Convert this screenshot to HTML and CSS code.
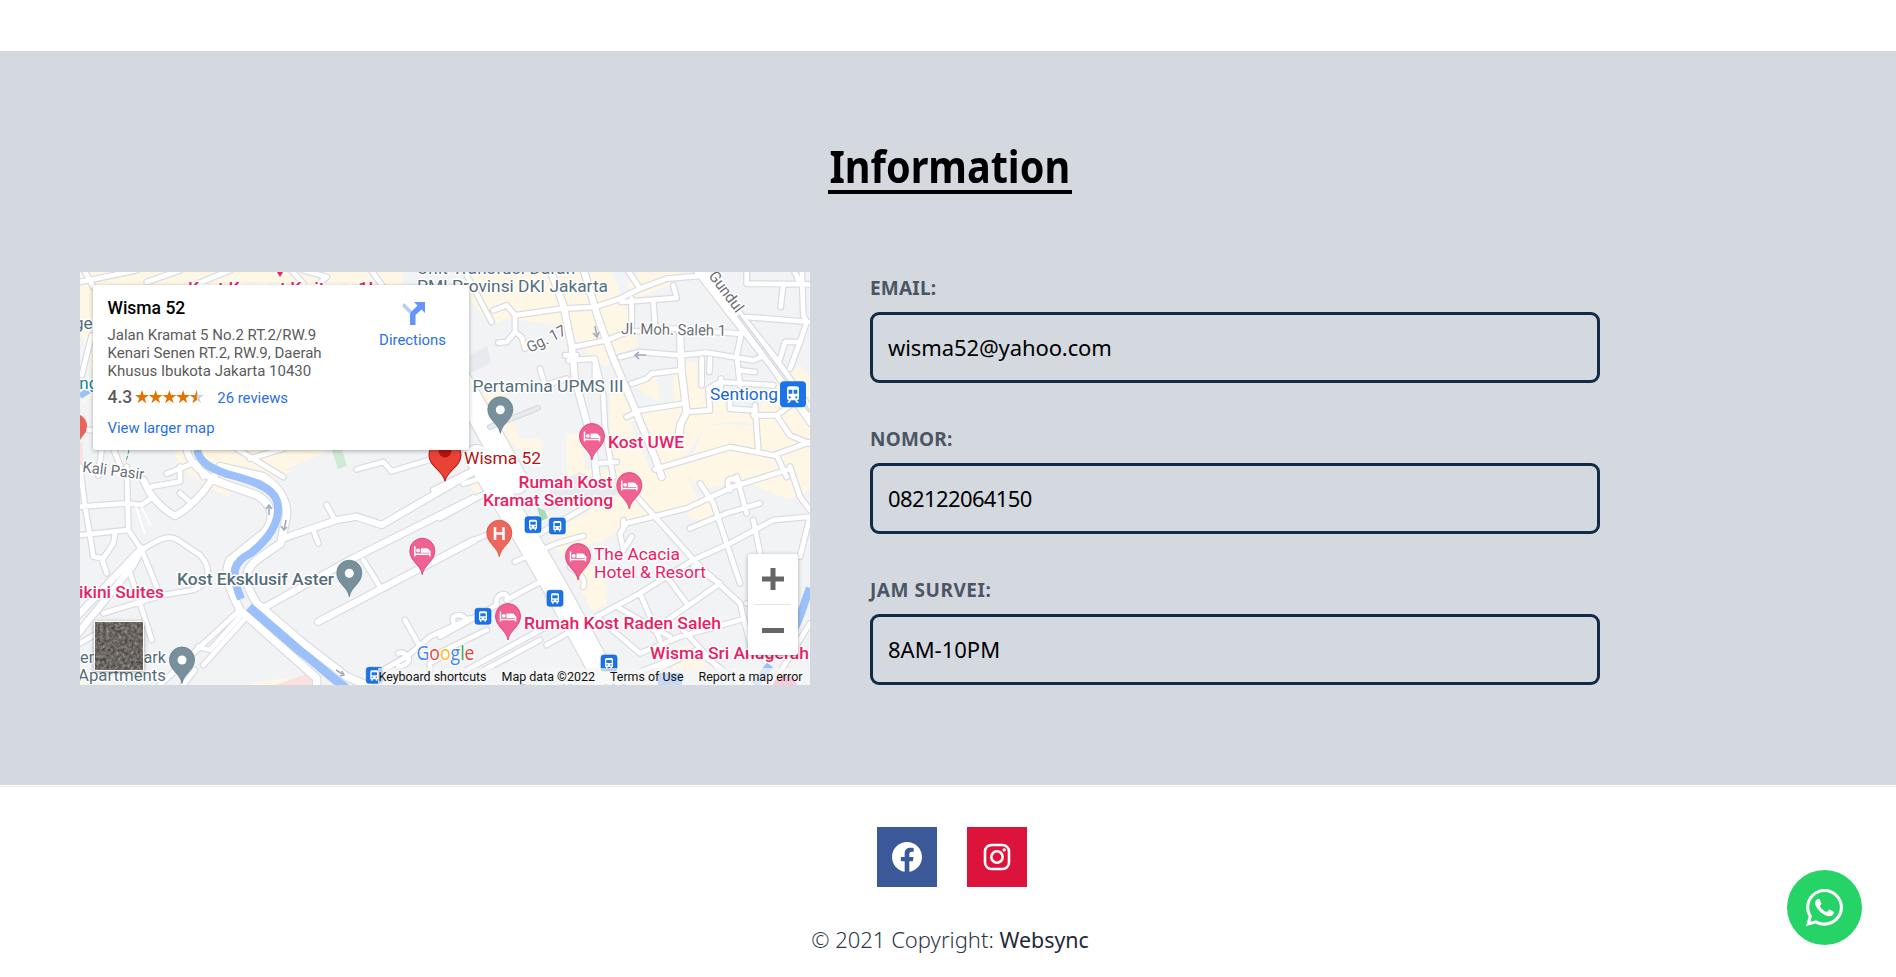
FILE: index.html
```html
<!DOCTYPE html>
<html lang="id">
<head>
<meta charset="utf-8">
<title>Wisma 52</title>
<link rel="stylesheet" href="styles.css">
</head>
<body>
<section class="info">
  <h2 class="info-title"><span class="info-title-text">Information</span></h2>
  <div class="info-grid">
    <div class="map">
      <svg class="map-canvas" viewBox="0 0 730 413" width="730" height="413">
        <defs>
          <g id="roads">
            <g transform="translate(-10 -10) scale(.33333)">
              <path class="road" d="M30 60L200 25M40 20L70 75M230 60L330 25M370 70L480 25M660 20L700 65M740 70L770 45L700 25M900 20L940 75M35 340L65 220M20 500L70 505M95 560L85 640M130 560L150 610M290 635L380 600L400 645M500 560L640 645M540 590L640 560M860 622L940 600L965 628L1090 590"/>
              <path class="road avenue" d="M350 555C350 600 400 640 450 660"/>
            </g>
            <g transform="translate(360 -10) scale(.33333)">
              <path class="road" d="M70 20L155 180M160 145L200 130L225 160L365 140L465 135L540 110L600 80L680 50L800 40M600 80L560 20M225 160V210L200 240L175 242M225 210L245 225L255 260M400 255L500 235L560 210L700 200L900 215M375 280H410M385 295L465 290L490 400L495 500L520 645M465 290L465 360M575 110L575 190M640 120L645 190M545 120L710 108L700 70M540 285L600 270L720 280L800 272L880 285L940 295L975 280M575 365L620 350L635 335L720 325M560 465L600 445L730 425M740 450L810 445L805 380L840 360L1000 370M785 290L785 370M810 290L808 330M843 350V380M905 210L890 280L900 370M900 325L945 330M920 165L1110 180M920 20V65L1110 67M1080 67L1060 20M1030 65L1022 135M1085 20L1090 160L1100 180L1080 240H1035L1020 290M1080 240L1050 320M945 430L955 570M940 460H1010L1050 520L1110 545M1010 460L1050 430M645 622L870 555L1000 580L1110 540M1010 580L1040 645M870 410V440L940 445M300 320L315 370L380 350M465 605L530 600M725 480L720 540M220 620L70 665"/>
              <path class="road avenue" d="M330 20L370 130L395 250L405 350L440 480L460 560L470 645M720 210L725 330L740 450L720 490L715 530"/>
              <path class="road avenue" d="M430 20L475 170L520 290L580 430L650 600L665 645"/>
              <path class="road rail-road" d="M780 20L880 150L1000 300L1120 475"/>
              <path class="road main-road" d="M20 290L130 480L230 660"/>
            </g>
            <g transform="translate(-10 198) scale(.33333)">
              <path class="road" d="M30 110L170 100L215 105L250 80M30 195L175 180M170 -10L175 180L215 240M60 195L70 260L100 265L130 220L135 190M95 265L110 310M30 -10L45 110L60 195M215 240C270 205 300 190 330 215L390 255C430 300 415 340 370 360L280 375L100 430M215 240L260 350M180 310L210 400L245 510M30 520L100 480M330 70L365 100M245 50L330 35V-10M770 105L795 150M730 180L745 220M880 270L930 350M1005 450L1050 530M930 605L1010 560L1080 500L1200 445M985 590C1040 580 1010 540 985 550M1080 600V580L1150 540M380 540L510 420M400 585L535 435M385 530L420 540L510 440M380 540L270 645M340 645L375 600"/>
              <path class="road avenue" d="M20 495L190 285L215 235M20 440L210 240M220 30L240 70C270 110 290 125 315 138C340 125 370 100 400 65L440 10"/>
              <path class="road bank" d="M430 30L560 75C620 110 610 160 580 190L480 270C460 310 475 350 510 420L740 625V660M450 -10L580 20C640 60 660 110 645 160L632 220L560 270C510 310 530 350 560 400L700 520L830 620L900 650"/>
              <path class="road avenue" d="M560 425L830 275L1210 85M745 455L1210 212M640 205L800 150L860 140L935 165L1210 5"/>
            </g>
            <g transform="translate(360 198) scale(.33333)">
              <path class="road" d="M0 145L90 95L170 50M-20 60L130 -15M0 265L90 215L250 150M300 190L440 110M225 275L350 220L430 198M0 500L170 405C160 370 210 360 200 390L320 325M0 548L140 480M80 600L320 470M40 650L300 510M320 525L400 480M430 350C440 320 410 310 390 290M40 455C30 430 70 430 80 450M590 80L690 190L770 280L900 400L940 560M470 440L600 370L760 270L870 220L1000 150L1110 140M540 190L560 160L640 140L740 115L880 50L1040 0M540 190L550 240L575 200M550 150V170M750 175L860 130L960 100M890 20L920 130M1050 -10L1080 80L1110 120M780 40L820 100L900 340M940 150L960 250M1110 140L1080 260M600 370L660 510M680 320L740 400M530 410L690 500M640 480L840 340M760 290L840 340M470 440L600 550L720 500L900 450M650 600L770 540L900 640M730 480L840 600M560 620L720 560M1110 460L1000 640M920 400L1000 380M870 60C850 20 880 20 900 40"/>
              <path class="road main-road" d="M110 -40L240 170L350 360L530 690"/>
            </g>
          </g>
          <path id="pin" d="M0 0C-1.500 -10 -12.500 -13 -12.500 -24A12.500 12.500 0 0 1 12.500 -24C12.500 -13 1.500 -10 0 0Z"/>
          <g id="hotel">
            <use href="#pin" fill="#f06292" stroke="#d83a76" stroke-width=".8"/>
            <path d="M-7.500 -28.500V-18.500M-7.500 -20.500H7.500M7.500 -18.500V-24" fill="none" stroke="#fff" stroke-width="1.500"/>
            <circle cx="-4.200" cy="-24.200" r="1.900" fill="#fff"/>
            <path d="M-1.500 -26.500H4Q7.500 -26.500 7.500 -22H-1.500Z" fill="#fff"/>
          </g>
          <g id="place">
            <use href="#pin" fill="#78909c" stroke="#607d8b" stroke-width=".8"/>
            <circle cy="-23.500" r="4.500" fill="#fff"/>
          </g>
          <g id="bus">
            <rect width="16" height="16" rx="2.500" fill="#1a73e8" stroke="#0d5bc6" stroke-width=".6"/>
            <path d="M4 4.500Q4 3 5.500 3H10.500Q12 3 12 4.500V12H11V13.500H9.500V12H6.500V13.500H5V12H4Z" fill="#fff"/>
            <path d="M5.300 5H10.700V8H5.300Z" fill="#1a73e8"/>
            <circle cx="6" cy="10" r=".8" fill="#1a73e8"/><circle cx="10" cy="10" r=".8" fill="#1a73e8"/>
          </g>
        </defs>
        <rect width="730" height="413" fill="#f1f3f4"/>
        <g fill="#fef7e5">
          <g transform="translate(-10 -10) scale(.33333)">
            <path d="M30 30H1000V75H30ZM30 75H70V340L30 200ZM30 430L70 370V400ZM310 560H790L560 660H400L330 620Z"/>
            <path d="M30 540H38V645H30Z" fill="#fce0de"/>
          </g>
          <g transform="translate(360 -10) scale(.33333)">
            <path d="M70 30H515L560 140L595 250L540 275L500 310L460 300L430 250L380 245L370 190L200 170L150 190L80 100ZM560 70L600 30H720L700 65L590 110ZM100 400L190 380L240 530L300 530L310 570L230 560L150 480ZM510 400L560 380L590 450L700 420V340H650L660 420L590 380L600 350L730 330V300H775L770 370L860 370V440H960L1000 360L1080 310L1110 340V645H680L600 470L570 480L640 645H380V520L420 515L440 640L510 640Z"/>
          </g>
          <g transform="translate(-10 198) scale(.33333)"><path d="M360 0L430 0L480 60L475 80L400 45ZM590 0H670L610 35ZM540 645Q600 620 680 630L740 645ZM30 620H50V645H30Z"/></g>
          <g transform="translate(360 198) scale(.33333)">
            <path d="M90 50L130 20L200 110L190 150ZM380 0H730L780 100L640 130L480 215L350 240L320 190L440 130ZM720 0H1110V60L1050 90L900 30L790 60ZM360 240L400 225L500 340V400L460 430ZM680 540L780 520L800 590L560 640L640 600ZM700 90L820 90V150L760 150Z"/>
          </g>
        </g>
        <path d="M624 155Q648 147 678 152L678 170L606 185Z" fill="#f1f3f4"/>
        <path d="M624 155Q648 149 690 156L730 162V190L610 190Z" fill="#fef7e5"/>
        <path d="M390 83L407 74L411 91L390 101Z" fill="#e8eaed"/>
        <path d="M462 240L550 220L500 200L470 215Z" fill="#e8eaed"/>
        <path d="M252 178H262L267 194L258 197Z" fill="#ceead6"/>
        <path d="M195 413L232 400L240 413Z" fill="#fce0de"/>
        <use href="#roads" class="road-casing"/>
        <use href="#roads" class="road-fill"/>
        <path d="M410 155L458 136" class="lane-edge"/>
        <path d="M410 155L458 136" class="lane"/>
        <g class="river">
          <path d="M117 178C120 192 133 197 147 202C170 208 193 215 197 229C202 250 187 268 171 281C153 290 150 300 161 327" stroke-width="8"/>
          <path d="M169 335L220 379C240 394 250 405 266 416" stroke-width="9"/>
          <path d="M730 316C723 333 720 348 715 355M690 393L675 413" stroke-width="8"/>
          <path d="M0 124L10 118" stroke-width="6"/>
        </g>
        <path d="M658 43L730 140" stroke="#d0d3d8" stroke-width="3" fill="none"/>
        <path d="M658 43L730 140" stroke="#f1f3f4" stroke-width="1" fill="none"/>
        <path d="M457 235L465 239L468 246L461 249Z" fill="#a8dab5"/>
        <path d="M49 178L46 190" stroke="#34a853" stroke-dasharray="4 2" fill="none"/>
        <path d="M56 235L65 262M60 232L71 254" stroke="#fff" stroke-width="2" fill="none"/>
        <g class="arrows">
          <path d="M189 243V234M186 237L189 233L192 237M206 248L204 258M201 254L204 258L207 255M515 54L517 64M513 61L517 65L519 60M566 83H556M559 80L555 83L559 87M256 398L264 403M260 404L264 403L262 399"/>
        </g>

        <g class="label slate">
          <text x="337" y="2" textLength="158">Unit Transfusi Darah</text>
          <text x="337" y="20" textLength="191" lengthAdjust="spacingAndGlyphs">PMI Provinsi DKI Jakarta</text>
          <text x="392.500" y="119.500" textLength="151" lengthAdjust="spacingAndGlyphs">Pertamina UPMS III</text>
          <text x="-6" y="57">ge</text>
          <text class="medium" x="97" y="313" textLength="157" lengthAdjust="spacingAndGlyphs">Kost Eksklusif Aster</text>
          <text x="-14" y="391" textLength="100" lengthAdjust="spacingAndGlyphs">Menteng Park</text>
          <text x="-2" y="409" textLength="88" lengthAdjust="spacingAndGlyphs">Apartments</text>
        </g>
        <g class="label street">
          <text x="2" y="200" transform="rotate(7 2 200)" textLength="62" lengthAdjust="spacingAndGlyphs">Kali Pasir</text>
          <text transform="translate(450 81) rotate(-27)" textLength="42" lengthAdjust="spacingAndGlyphs">Gg. 17</text>
          <text x="541" y="62" textLength="105" lengthAdjust="spacingAndGlyphs" transform="rotate(1 541 62)">Jl. Moh. Saleh 1</text>
          <text transform="translate(628 4) rotate(53)" textLength="47" lengthAdjust="spacingAndGlyphs">Gundul</text>
        </g>
        <text class="label teal" x="-10" y="117">ang</text>
        <text class="label blue" x="630" y="128" textLength="68" lengthAdjust="spacingAndGlyphs">Sentiong</text>
        <g class="label pink">
          <text class="medium" x="108" y="22" textLength="190" lengthAdjust="spacingAndGlyphs">Kost Kramat Kwitang 1L</text>
          <text class="medium" x="528" y="175.500" textLength="76" lengthAdjust="spacingAndGlyphs">Kost UWE</text>
          <text class="medium" x="438.500" y="216" textLength="94" lengthAdjust="spacingAndGlyphs">Rumah Kost</text>
          <text class="medium" x="403" y="234" textLength="130" lengthAdjust="spacingAndGlyphs">Kramat Sentiong</text>
          <text x="514" y="288" textLength="86" lengthAdjust="spacingAndGlyphs">The Acacia</text>
          <text x="514" y="305.500" textLength="112" lengthAdjust="spacingAndGlyphs">Hotel &amp; Resort</text>
          <text class="medium" x="444" y="356.500" textLength="197" lengthAdjust="spacingAndGlyphs">Rumah Kost Raden Saleh</text>
          <text class="medium" x="570" y="386.500" textLength="159" lengthAdjust="spacingAndGlyphs">Wisma Sri Anugerah</text>
          <text class="medium" x="-1" y="326" textLength="85" lengthAdjust="spacingAndGlyphs">ikini Suites</text>
        </g>
        <text class="label red" x="384" y="192" textLength="77" lengthAdjust="spacingAndGlyphs">Wisma 52</text>

        <path d="M197 0H203L200 5Z" fill="#e91e63"/>
        <circle cx="-5" cy="154" r="12" fill="#ea6459"/><path d="M-3 166L7 158L0 168Z" fill="#ea6459"/>
        <use href="#pin" transform="translate(365 209.300) scale(1.280 1.100)" fill="#ea4335" stroke="#b31412" stroke-width=".8"/>
        <circle cx="365" cy="179" r="6.500" fill="#b31412"/>
        <use href="#place" x="420.300" y="161.300"/>
        <use href="#place" x="269.300" y="324.700"/>
        <use href="#place" x="102" y="411.500"/>
        <use href="#hotel" x="512" y="188"/>
        <use href="#hotel" x="549.300" y="237"/>
        <use href="#hotel" x="498" y="308"/>
        <use href="#hotel" x="428" y="368"/>
        <use href="#hotel" x="342.300" y="302.700"/>
        <use href="#pin" x="419.300" y="284.700" fill="#ee675c" stroke="#d84a40" stroke-width=".8"/>
        <path d="M415 255V268M423.500 255V268M415 261.500H423.500" stroke="#fff" stroke-width="2.600" fill="none"/>
        <circle cx="705" cy="415" r="12" fill="#f06292"/>
        <use href="#bus" x="445" y="244.700"/>
        <use href="#bus" x="469.300" y="246"/>
        <use href="#bus" x="467" y="318.300"/>
        <use href="#bus" x="395" y="336.300"/>
        <use href="#bus" x="521" y="383"/>
        <use href="#bus" x="286.300" y="395.300"/>
        <rect x="578" y="401" width="24" height="14" rx="2" fill="#4b8df0"/>
        <text class="label blue" x="438" y="424" textLength="125">Plaza Kenari Mas</text>
        <g transform="translate(700 109.300)">
          <rect width="26" height="26" rx="4" fill="#1a73e8"/>
          <path d="M7 7Q7 5 10 5H16Q19 5 19 7V17Q19 19 17 19L19 21.500H16.500L15 19H11L9.500 21.500H7L9 19Q7 19 7 17Z" fill="#fff"/>
          <path d="M8.700 8.500H12.300V12.500H8.700ZM13.700 8.500H17.300V12.500H13.700Z" fill="#1a73e8"/>
          <circle cx="9.700" cy="16" r="1.100" fill="#1a73e8"/><circle cx="16.300" cy="16" r="1.100" fill="#1a73e8"/>
        </g>
        <path d="M298 396H730V413H298Z" fill="#f5f5f5" fill-opacity=".72"/>
        <g class="terms">
          <text x="298.500" y="409" textLength="108" lengthAdjust="spacingAndGlyphs">Keyboard shortcuts</text>
          <text x="421.500" y="409" textLength="93.500" lengthAdjust="spacingAndGlyphs">Map data ©2022</text>
          <text x="530" y="409" textLength="73.500" lengthAdjust="spacingAndGlyphs">Terms of Use</text>
          <text x="618.500" y="409" textLength="104" lengthAdjust="spacingAndGlyphs">Report a map error</text>
        </g>
        <text class="google" x="336.500" y="387.500" textLength="58" lengthAdjust="spacingAndGlyphs"><tspan fill="#4285f4">G</tspan><tspan fill="#ea4335">o</tspan><tspan fill="#fbbc04">o</tspan><tspan fill="#4285f4">g</tspan><tspan fill="#34a853">l</tspan><tspan fill="#ea4335">e</tspan></text>
      </svg>

      <div class="place-card">
        <div class="place-details">
          <strong class="place-name">Wisma 52</strong>
          <p class="place-address">Jalan Kramat 5 No.2 RT.2/RW.9<br>Kenari Senen RT.2, RW.9, Daerah<br>Khusus Ibukota Jakarta 10430</p>
          <div class="rating">
            <b class="score">4.3</b>
            <svg width="70" height="14" viewBox="0 0 70 14">
              <defs>
                <path id="star" d="M7 0L8.700 5H14L9.700 8.200L11.300 13.200L7 10.100L2.700 13.200L4.300 8.200L0 5H5.300Z"/>
                <clipPath id="half"><path d="M0 0H7V14H0Z"/></clipPath>
              </defs>
              <g fill="#e37400"><use href="#star"/><use href="#star" x="13.700"/><use href="#star" x="27.400"/><use href="#star" x="41.100"/></g>
              <g transform="translate(54.800 0)"><use href="#star" fill="#d0d3d6"/><use href="#star" fill="#e37400" clip-path="url(#half)"/></g>
            </svg>
            <span class="link">26 reviews</span>
          </div>
          <span class="link">View larger map</span>
        </div>
        <div class="directions">
          <svg width="24" height="23" viewBox="0 0 24 23">
            <path d="M3 1L12 10V14L9 12L1 4Z" fill="#b4cdfb"/>
            <path d="M13 0H24V11L20.500 7.500L14.500 13V23H9V13Q9 11 10.500 9.500L16.500 3.500Z" fill="#6495fb"/>
          </svg>
          <span class="link">Directions</span>
        </div>
      </div>
      <svg class="satellite" width="50" height="50" viewBox="0 0 50 50">
        <filter id="ground" x="0" y="0" width="1" height="1" color-interpolation-filters="sRGB">
          <feTurbulence type="fractalNoise" baseFrequency=".32" numOctaves="4" seed="6"/>
          <feColorMatrix values=".45 .15 0 0 .12 .45 .15 0 0 .1 .45 .13 0 0 .09 0 0 0 0 1"/>
        </filter>
        <rect width="50" height="50" rx="2" fill="#fff"/>
        <rect x="1" y="1" width="48" height="48" filter="url(#ground)"/>
      </svg>
      <div class="zoom-control">
        <svg width="50" height="101" viewBox="0 0 50 101">
          <path d="M14 25H36M25 14V36M14 76.500H36" stroke="#666" stroke-width="5"/>
          <path d="M6 50.500H43" stroke="#e6e6e6"/>
        </svg>
      </div>
    </div>

    <div class="contact">
      <div class="field"><span class="field-label">EMAIL:</span><div class="field-box email">wisma52@yahoo.com</div></div>
      <div class="field"><span class="field-label">NOMOR:</span><div class="field-box phone">082122064150</div></div>
      <div class="field"><span class="field-label hours-label">JAM SURVEI:</span><div class="field-box">8AM-10PM</div></div>
    </div>
  </div>
</section>
<footer class="footer">
  <div class="socials">
    <span class="social facebook">
      <svg width="30" height="30" viewBox="8 8 496 496"><path fill="#fff" d="M504 256C504 119 393 8 256 8S8 119 8 256c0 123.780 90.690 226.380 209.250 245V327.690h-63V256h63v-54.640c0-62.150 37-96.480 93.670-96.480 27.140 0 55.520 4.840 55.520 4.840v61h-31.280c-30.800 0-40.410 19.120-40.410 38.730V256h68.780l-11 71.690h-57.780V501C413.310 482.380 504 379.780 504 256z"/></svg>
    </span>
    <span class="social instagram">
      <svg width="28" height="28" viewBox="0 0 28 28" fill="none" stroke="#fff"><rect x="2" y="2" width="24" height="24" rx="6.500" stroke-width="2.600"/><circle cx="14" cy="14" r="5.700" stroke-width="2.600"/><circle cx="21.200" cy="6.900" r="1.700" fill="#fff" stroke="none"/></svg>
    </span>
  </div>
  <p class="copyright">© 2021 Copyright: <span class="brand">Websync</span></p>
</footer>
<div class="whatsapp">
  <svg width="37" height="37" viewBox="0 32 448 448"><path fill="#fff" d="M380.900 97.100C339 55.100 283.200 32 223.900 32c-122.400 0-222 99.600-222 222 0 39.100 10.200 77.300 29.600 111L0 480l117.700-30.900c32.400 17.700 68.900 27 106.100 27h.1c122.300 0 224.100-99.600 224.100-222 0-59.300-25.200-115-67.100-157zm-157 341.600c-33.200 0-65.700-8.900-94-25.700l-6.700-4-69.800 18.300L72 359.200l-4.400-7c-18.500-29.400-28.200-63.300-28.200-98.200 0-101.700 82.800-184.500 184.600-184.500 49.300 0 95.600 19.200 130.400 54.100 34.800 34.900 56.200 81.200 56.100 130.500 0 101.800-84.900 184.600-186.600 184.600zm101.200-138.200c-5.500-2.800-32.800-16.200-37.900-18-5.100-1.900-8.800-2.800-12.500 2.800-3.700 5.600-14.300 18-17.600 21.800-3.200 3.700-6.500 4.200-12 1.400-32.600-16.300-54-29.100-75.500-66-5.700-9.800 5.700-9.100 16.300-30.300 1.800-3.700.9-6.900-.5-9.700-1.400-2.800-12.500-30.100-17.100-41.200-4.500-10.800-9.100-9.300-12.500-9.500-3.200-.2-6.900-.2-10.600-.2-3.700 0-9.700 1.400-14.800 6.900-5.100 5.600-19.400 19-19.400 46.300 0 27.300 19.900 53.700 22.600 57.400 2.800 3.700 39.100 59.700 94.800 83.800 35.200 15.200 49 16.500 66.600 13.900 10.700-1.600 32.800-13.400 37.400-26.400 4.600-13 4.600-24.100 3.200-26.400-1.300-2.500-5-3.900-10.500-6.600z"/></svg>
</div>
</body>
</html>
```

FILE: styles.css
```css
* { box-sizing: border-box; }

body {
  margin: 0;
  padding-top: 51px;
  height: 977px;
  overflow: hidden;
  background: #fff;
  font-family: "Noto Sans", "Open Sans", sans-serif;
}

.info {
  height: 734px;
  padding: 86px 80px 0;
  background: #d4d9e0;
}

.info-title {
  display: flex;
  justify-content: center;
  width: 244px;
  height: 57px;
  margin: 0 0 78px 748px;
  border-bottom: 4px solid #000;
  color: #000;
  font: 700 45px/57px "Noto Sans", sans-serif;
  white-space: nowrap;
}
.info-title-text { flex: none; transform: scaleX(.88); }

.info-grid {
  display: grid;
  grid-template-columns: 730px 730px;
  gap: 60px;
}

.map {
  position: relative;
  height: 413px;
  overflow: hidden;
  font-family: Roboto, sans-serif;
}

.map-canvas { display: block; }

.road { stroke-width: calc(var(--w, 14px) + var(--edge, 0px)); }
.avenue { --w: 19px; }
.bank { --w: 22px; }
.rail-road { --w: 40px; }
.main-road { --w: 70px; }
.road-casing { --edge: 7px; fill: none; stroke: #d9dbe1; stroke-linecap: round; stroke-linejoin: round; }
.road-fill { fill: none; stroke: #fff; stroke-linecap: round; stroke-linejoin: round; }
.lane-edge { fill: none; stroke: #d3d6dd; stroke-width: 6px; stroke-linecap: round; }
.lane { fill: none; stroke: #e8eaed; stroke-width: 4px; stroke-linecap: round; }

.river { fill: none; stroke: #9cc0f9; }
.arrows { fill: none; stroke: #a4abbd; stroke-width: 1.6px; }

.label {
  font: 400 17px Roboto, sans-serif;
  paint-order: stroke;
  stroke: #fff;
  stroke-width: 3px;
  stroke-linejoin: round;
}
.medium { font-weight: 500; }
.slate { fill: #546e7a; }
.street { fill: #6b6f75; font-size: 15.5px; }
.teal { fill: #12858d; }
.blue { fill: #1967d2; }
.pink { fill: #e91e63; }
.red { fill: #b31412; }
.terms { font: 400 12.5px Roboto, sans-serif; fill: #111; }
.google { font: 500 20px "Open Sans", sans-serif; stroke: #fff; stroke-width: 2px; paint-order: stroke; }

.place-card {
  position: absolute;
  top: 13px;
  left: 13px;
  display: flex;
  justify-content: space-between;
  width: 376px;
  height: 165px;
  padding: 13px 23px 0 14.5px;
  border-radius: 2px;
  background: #fff;
  box-shadow: 0 1px 4px rgba(0, 0, 0, .3);
}

.place-details { white-space: nowrap; font-size: 15px; line-height: 18px; }
.place-name { display: block; color: #000; font-size: 17.5px; font-weight: 500; line-height: 21px; }
.place-address { margin: 7px 0 8px; color: #5b5b5b; font-size: 15px; }
.rating { display: flex; align-items: center; height: 18px; margin-bottom: 13px; }
.score { margin-right: 3px; color: #5b5b5b; font-size: 17.5px; font-weight: 500; }
.rating .link { margin-left: 12px; padding-top: 1px; }
.link { color: #2a6fe8; font-size: 14.9px; }

.directions {
  display: flex;
  flex-direction: column;
  align-items: center;
  gap: 6px;
  padding-top: 4px;
  line-height: 18px;
}

.satellite {
  position: absolute;
  left: 14px;
  top: 349px;
  filter: drop-shadow(0 1px 2px rgba(0, 0, 0, .35));
}

.zoom-control {
  position: absolute;
  left: 668px;
  top: 282px;
  width: 50px;
  height: 101px;
  border-radius: 2px;
  background: #fff;
  box-shadow: 0 1px 4px rgba(0, 0, 0, .3);
}

.contact { display: flex; flex-direction: column; gap: 40px; }
.field { height: 111px; padding-top: 4px; }
.field-label {
  display: block;
  height: 36px;
  color: #4b5563;
  font-size: 19px;
  font-weight: 700;
  line-height: 24px;
  letter-spacing: .2px;
}
.hours-label { letter-spacing: .55px; }
.field-box {
  height: 71px;
  padding: 0 15px;
  border: 3px solid #102a47;
  border-radius: 9px;
  color: #000;
  font-size: 22px;
  line-height: 65px;
}
.email { letter-spacing: -.1px; }
.phone { letter-spacing: -.6px; }

.footer {
  height: 191px;
  margin-top: 1px;
  padding-top: 40px;
  border-top: 1px solid #e5e7eb;
}
.socials { display: flex; gap: 30px; padding-left: 877px; }
.social { display: flex; align-items: center; justify-content: center; width: 60px; height: 60px; }
.facebook { background: #3b5998; }
.instagram { background: #dc143c; }

.copyright {
  margin: 36px 0 0;
  padding-left: 4px;
  color: #2f3848;
  font-size: 22px;
  font-weight: 300;
  line-height: 32px;
  text-align: center;
}
.brand { color: #1f2937; font-size: 21.4px; font-weight: 400; }

.whatsapp {
  position: fixed;
  left: 1787px;
  top: 870px;
  display: flex;
  align-items: center;
  justify-content: center;
  width: 75px;
  height: 75px;
  border-radius: 50%;
  background: #25d366;
}
```
